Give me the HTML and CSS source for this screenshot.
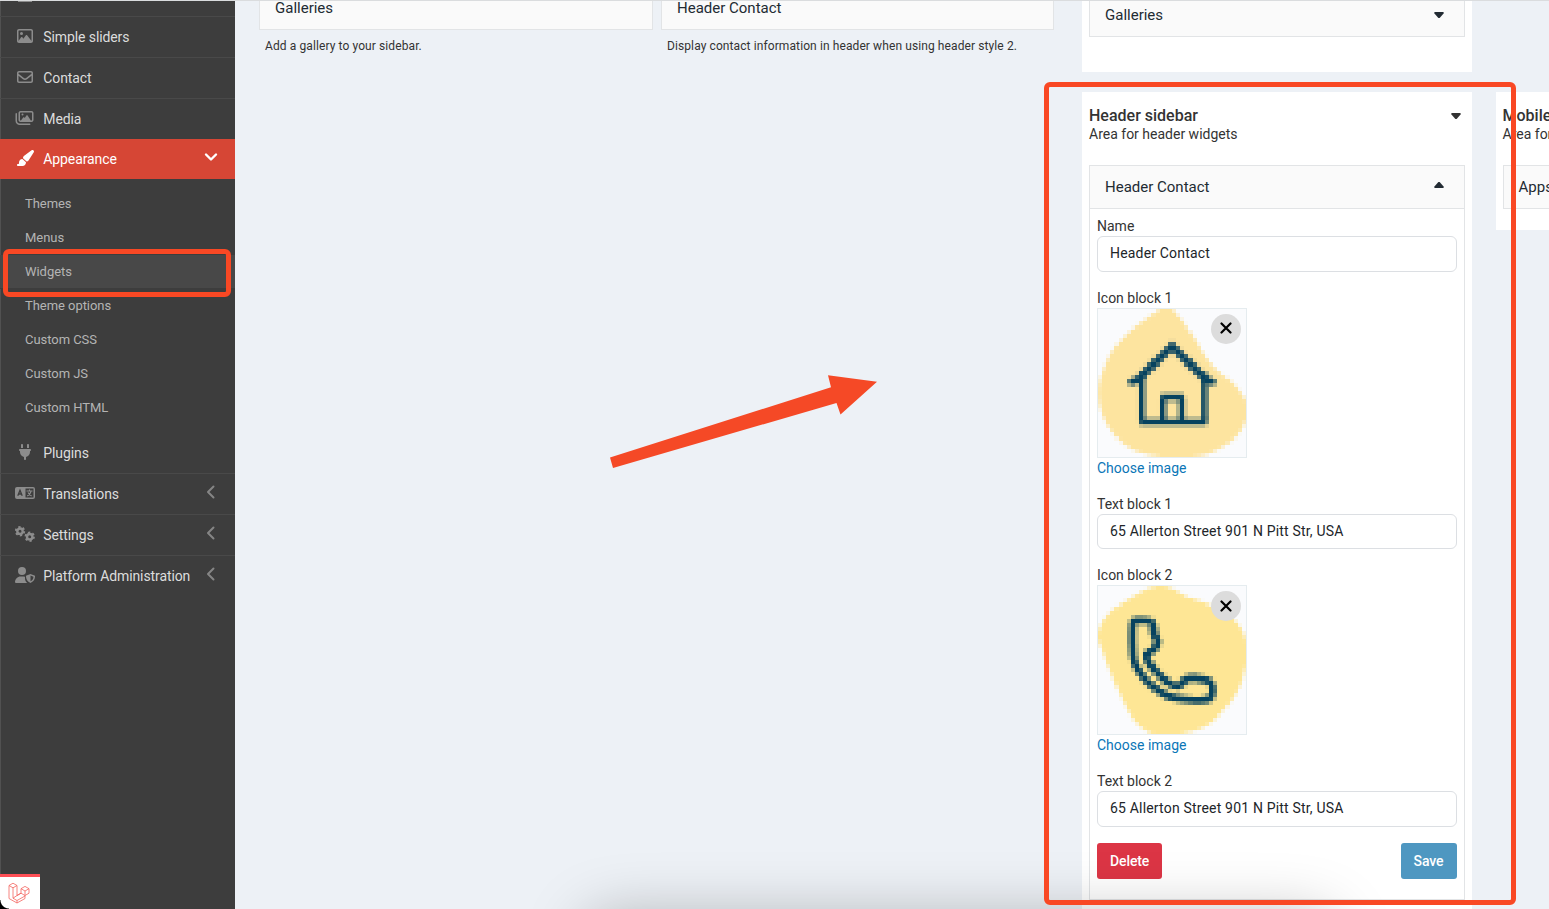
FILE: index.html
```
<!DOCTYPE html>
<html lang="en">
<head>
<meta charset="utf-8">
<title>Widgets</title>
<link rel="stylesheet" href="styles.css">
</head>
<body>
<div class="page">
  <aside class="sidebar">
    <nav class="menu">
      <div class="item item-cut"><svg class="icon" viewBox="0 0 20 1"><path d="M3 0h14v1H3z"/></svg></div>
      <div class="item"><svg class="icon" viewBox="-64 0 640 512"><path d="M448 80c8.800 0 16 7.200 16 16V415.800l-5-6.500-136-176c-4.500-5.900-11.600-9.300-19-9.300s-14.400 3.400-19 9.300L202 340.700l-30.500-42.700C167 291.700 159.800 288 152 288s-15 3.700-19.500 10.100l-80 112L48 416.300V96c0-8.800 7.200-16 16-16H448zM64 32C28.700 32 0 60.700 0 96V416c0 35.300 28.700 64 64 64H448c35.300 0 64-28.700 64-64V96c0-35.300-28.700-64-64-64H64zm80 192a48 48 0 1 0 0-96 48 48 0 1 0 0 96z"/></svg><span>Simple sliders</span></div>
      <div class="item"><svg class="icon" viewBox="-64 0 640 512"><path d="M64 112c-8.800 0-16 7.200-16 16v22.100L220.500 291.700c20.700 17 50.400 17 71.100 0L464 150.100V128c0-8.800-7.200-16-16-16H64zM48 212.200V384c0 8.800 7.200 16 16 16H448c8.800 0 16-7.200 16-16V212.200L322 328.800c-38.400 31.500-93.700 31.500-132 0L48 212.200zM0 128C0 92.700 28.700 64 64 64H448c35.300 0 64 28.700 64 64V384c0 35.300-28.700 64-64 64H64c-35.300 0-64-28.700-64-64V128z"/></svg><span>Contact</span></div>
      <div class="item"><svg class="icon icon-wide" viewBox="-32 0 640 512"><path d="M160 80H512c8.800 0 16 7.200 16 16V320c0 8.800-7.200 16-16 16H490.800L388.100 178.900c-4.400-6.800-12-10.900-20.100-10.900s-15.700 4.100-20.100 10.900l-52.200 79.800-12.400-16.900c-4.500-6.200-11.700-9.800-19.400-9.800s-14.800 3.600-19.400 9.800L175.600 336H160c-8.800 0-16-7.200-16-16V96c0-8.800 7.200-16 16-16zM96 96V320c0 35.300 28.700 64 64 64H512c35.300 0 64-28.700 64-64V96c0-35.300-28.700-64-64-64H160c-35.300 0-64 28.700-64 64zM48 120c0-13.300-10.700-24-24-24S0 106.700 0 120V344c0 75.100 60.900 136 136 136H456c13.300 0 24-10.700 24-24s-10.700-24-24-24H136c-48.600 0-88-39.400-88-88V120zm208 24a32 32 0 1 0-64 0 32 32 0 1 0 64 0z"/></svg><span>Media</span></div>
      <div class="item item-active"><svg class="icon" viewBox="-32 0 640 512"><path d="M339.300 367.100c27.300-3.900 51.900-19.400 67.200-42.900L568.200 74.100c12.600-19.500 9.400-45.300-7.600-61.200S517.700-4.400 499.100 9.600L262.400 187.200c-24 18-38.200 46.100-38.400 76.100L339.300 367.100zm-19.600 25.400l-116-104.400C143.900 290.300 96 339.600 96 400c0 3.900.2 7.800.6 11.600C98.400 429.100 86.400 448 68.800 448H64c-17.700 0-32 14.300-32 32s14.300 32 32 32H208c61.900 0 112-50.100 112-112c0-2.500-.1-5-.2-7.500z"/></svg><span>Appearance</span><svg class="chev" viewBox="0 0 14 14"><path d="M2 4.500l5 5 5-5"/></svg></div>
    </nav>
    <div class="submenu">
      <a>Themes</a><a>Menus</a><a class="current">Widgets</a><a>Theme options</a><a>Custom CSS</a><a>Custom JS</a><a>Custom HTML</a>
      <div class="outline outline-menu"></div>
    </div>
    <nav class="menu">
      <div class="item"><svg class="icon" viewBox="-128 0 640 512"><path d="M96 0C78.300 0 64 14.300 64 32v96h64V32c0-17.700-14.300-32-32-32zM288 0c-17.700 0-32 14.300-32 32v96h64V32c0-17.700-14.300-32-32-32zM32 160c-17.700 0-32 14.300-32 32s14.300 32 32 32v32c0 77.400 55 142 128 156.800V480c0 17.700 14.300 32 32 32s32-14.300 32-32V412.800C297 398 352 333.400 352 256V224c17.700 0 32-14.300 32-32s-14.300-32-32-32H32z"/></svg><span>Plugins</span></div>
      <div class="item"><svg class="icon" viewBox="0 0 20 16"><path fill-rule="evenodd" d="M2 2h16a2 2 0 0 1 2 2v8a2 2 0 0 1-2 2H2a2 2 0 0 1-2-2V4a2 2 0 0 1 2-2zM10.500 3.500v9h8v-9z"/><path class="cut" d="M2.800 10.800L5 5.200l2.200 5.600M3.600 9h2.800"/><path class="line" d="M11.500 6h6M14.500 4.500V6M16 6.500c-.5 2-2 3.600-3.800 4.400M13 7.500c.8 1.600 2 2.700 3.600 3.400"/></svg><span>Translations</span><svg class="chev" viewBox="0 0 14 14"><path d="M9.500 1.500L4 7l5.500 5.500"/></svg></div>
      <div class="item"><svg class="icon" viewBox="0 0 20 16"><circle class="teeth" cx="5" cy="5.200" r="4.200"/><circle class="ring" cx="5" cy="5.200" r="2.700"/><circle class="teeth" cx="14.700" cy="10.700" r="4.200"/><circle class="ring" cx="14.700" cy="10.700" r="2.700"/></svg><span>Settings</span><svg class="chev" viewBox="0 0 14 14"><path d="M9.500 1.500L4 7l5.500 5.500"/></svg></div>
      <div class="item"><svg class="icon" viewBox="0 0 20 16"><circle cx="7" cy="4" r="4"/><path d="M5.600 9.500h2.800l1.600.2v1.800c0 1.800.8 3.300 2.200 4.500H1a1 1 0 0 1-1-1c0-3 2.500-5.500 5.600-5.500z"/><path fill-rule="evenodd" d="M15.500 7l4.500 1.700c.2 3-1.200 6-4.500 7.300-3.300-1.300-4.700-4.300-4.500-7.300zM15.500 8.600v5.700c2-1 2.900-2.700 3-4.600z"/></svg><span>Platform Administration</span><svg class="chev" viewBox="0 0 14 14"><path d="M9.500 1.500L4 7l5.500 5.500"/></svg></div>
    </nav>
    <div class="debugbar"><svg viewBox="0 0 22 22"><path d="M1 3.500l4-2.300 4 2.300v10l4-2.300V6.700l4-2.300 4 2.300v4.500l-4 2.300v3L9 21l-8-4.500zM1 3.500l4 2.300 4-2.300M5 5.800v10.400L9 18.500 17 14M9 13.500l-4 2.700M13 6.700L17 9l4-2.300M17 9v4.500l-4-2.300M9 18.500V21M9 13.500l4-2.300"/></svg></div>
  </aside>

  <main class="content">
    <section class="available">
      <div><div class="card">Galleries</div><p>Add a gallery to your sidebar.</p></div>
      <div><div class="card">Header Contact</div><p>Display contact information in header when using header style 2.</p></div>
    </section>
    <section class="areas">
      <div class="area area-top">
        <div class="widget"><div class="widget-head">Galleries<i class="caret"></i></div></div>
      </div>
      <div class="area-row">
        <div class="area area-main">
          <div class="area-head"><div><h2>Header sidebar</h2><p>Area for header widgets</p></div><i class="caret"></i></div>
          <div class="widget">
            <div class="widget-head">Header Contact<i class="caret caret-up"></i></div>
            <form class="form">
              <div class="field"><label>Name</label><div class="input">Header Contact</div></div>
              <div class="field"><label>Icon block 1</label><div class="thumb"><canvas id="house" width="36" height="36"></canvas><span class="remove"><svg viewBox="0 0 12 12"><path d="M1.500 1.500l9 9M10.500 1.500l-9 9"/></svg></span></div><a class="choose">Choose image</a></div>
              <div class="field"><label>Text block 1</label><div class="input">65 Allerton Street 901 N Pitt Str, USA</div></div>
              <div class="field"><label>Icon block 2</label><div class="thumb"><canvas id="phone" width="36" height="36"></canvas><span class="remove"><svg viewBox="0 0 12 12"><path d="M1.500 1.500l9 9M10.500 1.500l-9 9"/></svg></span></div><a class="choose">Choose image</a></div>
              <div class="field"><label>Text block 2</label><div class="input">65 Allerton Street 901 N Pitt Str, USA</div></div>
              <div class="actions"><span class="btn btn-danger">Delete</span><span class="btn btn-info">Save</span></div>
            </form>
          </div>
        </div>
        <div class="area area-mobile">
          <div class="area-head"><div><h2>Mobile sidebar</h2><p>Area for mobile</p></div></div>
          <div class="widget"><div class="widget-head">Apps</div></div>
        </div>
      </div>
    </section>
  </main>
  <div class="shade"></div>
  <svg class="arrow" viewBox="600 360 290 120"><path d="M610 457.500L831 387.300 828 375.300 877 381.800 840.500 414.500 836.500 403 613 468z"/></svg>
  <div class="outline outline-area"></div>
</div>
<script src="icons.js"></script>
</body>
</html>
```
FILE: styles.css
```
* { box-sizing: border-box; }
body { margin: 0; font-family: Roboto, "Liberation Sans", sans-serif; font-size: 14px; line-height: 20px; color: #333; }
h2, p { margin: 0; }
.page { position: relative; display: flex; width: 1549px; height: 909px; overflow: hidden; background: #edf1f6; border-top: 1px solid #dadcde; }

.sidebar { position: relative; width: 235px; height: 908px; flex: none; background: linear-gradient(90deg, #515151 1px, #3d3d3d 1px); color: #dcdcdc; overflow: hidden; }
.item { display: flex; align-items: center; height: 41px; padding: 0 17px 0 15px; border-bottom: 1px solid #494949; }
.item span { flex: 1; margin-left: 8.3px; letter-spacing: -.1px; }
.item:last-child { border-bottom-color: transparent; }
.item-cut { height: 16px; align-items: flex-start; }
.item-cut .icon { height: 1px; margin-top: 0; }
.item-active { height: 40px; margin-top: -1px; position: relative; background: #d64635; border: 0; color: #fff; }
.icon { width: 20px; height: 16px; margin-top: -2px; fill: #8c8c8c; flex: none; }
.item-active .icon { fill: #fff; }
.icon .cut { fill: none; stroke: #3d3d3d; stroke-width: 1.3; }
.icon .line { fill: none; stroke: #8c8c8c; stroke-width: 1.1; }
.icon .teeth { fill: none; stroke: #8c8c8c; stroke-width: 2; stroke-dasharray: 2.2 2.2; }
.icon .ring { fill: none; stroke: #8c8c8c; stroke-width: 2.4; }
.chev { width: 14px; height: 14px; margin-top: -4px; }
.chev path { fill: none; stroke: #858585; stroke-width: 2; stroke-linecap: round; stroke-linejoin: round; }
.item-active .chev path { stroke: #fff; stroke-width: 2.4; }
.submenu { position: relative; padding: 8px 0; }
.submenu a { display: block; height: 34px; padding-left: 25px; line-height: 33px; font-size: 13px; letter-spacing: -.05px; color: #b4b4b4; }
.submenu .current { background: linear-gradient(#484848 33px, #3d3d3d 33px); }
.debugbar { position: absolute; left: 0; bottom: 0; width: 40px; height: 35px; padding: 5px 0 0 8px; border-top: 3px solid #ff4f56; background: radial-gradient(circle at 100% 0, #fff 0 8px, #000 9px) 0 100% / 9px 9px no-repeat, #fff; }
.debugbar svg { width: 22px; height: 22px; display: block; }
.debugbar path { fill: none; stroke: #f4645f; stroke-width: .8; stroke-linejoin: round; }

.content { display: flex; gap: 28px; padding-left: 24px; flex: none; }
.available { display: grid; grid-template-columns: 394px 393px; gap: 8px; align-content: start; }
.available p { padding: 6px 6px; font-size: 12px; line-height: 20px; letter-spacing: .1px; }
.card { height: 29px; padding: 0 15px; border: 1px solid #e2e4e6; border-top: 0; background: #fafafa; font-size: 15px; line-height: 14px; color: #222b33; }
.area { width: 390px; padding: 0 7px; background: #fff; }
.area-top { height: 71px; margin-bottom: 20px; }
.area-row { display: flex; gap: 24px; }
.area-main { height: 830px; }
.area-mobile { height: 138px; padding-left: 6.5px; }
.area-head { display: flex; justify-content: space-between; height: 73px; padding: 14px 4px 0 0; }
.area-head .caret { margin-top: 7px; }
h2 { font-size: 16px; line-height: 20px; font-weight: 500; }
.area-head p { line-height: 17px; }
.widget { border: 1px solid #e2e4e6; width: 376px; }
.area-top .widget { border-top: 0; }
.widget-head { display: flex; align-items: center; justify-content: space-between; height: 43px; padding: 0 20px 0 15px; background: #fafafa; border-bottom: 1px solid #e2e4e6; color: #222b33; font-size: 15px; }
.area-top .widget-head, .area-mobile .widget-head { border-bottom: 0; }
.area-mobile .widget-head { height: 42px; }
.area-top .widget-head { height: 35px; padding-bottom: 7px; }
.caret { width: 10px; height: 6px; background: currentColor; clip-path: polygon(8% 0, 92% 0, 100% 18%, 56% 100%, 44% 100%, 0 18%); }
.caret-up { transform: rotate(180deg); margin-top: -4px; }
.form { padding: 7px 7px 20px; }
.field { margin-bottom: 16px; }
.field label { display: block; height: 20px; }
.input { height: 35.5px; padding: 0 12px; border: 1px solid #dcdfe3; border-radius: 6px; line-height: 33px; color: #212529; letter-spacing: .18px; }
.thumb { position: relative; width: 150px; height: 150px; border: 1px solid #e5ecef; background: #fafbfd; }
.thumb canvas { display: block; width: 148px; height: 148px; image-rendering: pixelated; }
.remove { position: absolute; top: 5px; right: 5px; width: 30px; height: 30px; border-radius: 50%; background: #dcdcdc; display: grid; place-items: center; }
.remove svg { width: 12px; height: 12px; margin-top: -1px; }
.remove path { stroke: #000; stroke-width: 2.2; stroke-linecap: round; }
.choose { display: block; color: #0b76b7; }
.actions { display: flex; justify-content: space-between; }
.btn { height: 36px; padding: 0 13px; border-radius: 3px; line-height: 36px; font-weight: 500; letter-spacing: -.1px; color: #fff; }
.btn-danger { background: #dc3545; }
.btn-info { background: #4e97c1; padding: 0 13.5px 0 12.5px; }

.shade { position: absolute; left: 592px; top: 922px; width: 735px; height: 100px; border-radius: 20px; box-shadow: 0 0 60px 8px rgba(0,0,0,.26); }
.arrow { position: absolute; left: 600px; top: 359px; width: 290px; height: 120px; fill: #f54926; }
.outline { position: absolute; border: 5px solid #f94824; border-radius: 6px; }
.outline-menu { left: 3px; top: 70px; width: 228px; height: 48px; }
.outline-area { left: 1044px; top: 81px; width: 472px; height: 823px; }
.icon-wide { transform: translateX(-.5px); }
```
FILE: icons.js
```
// Low resolution thumbnails, scaled up by the stylesheet.
function smooth(ctx, pts, fill) {
  const n = pts.length;
  const mid = (a, b) => [(a[0] + b[0]) / 2, (a[1] + b[1]) / 2];
  ctx.beginPath();
  ctx.moveTo(...mid(pts[n - 1], pts[0]));
  pts.forEach((p, i) => ctx.quadraticCurveTo(...p, ...mid(p, pts[(i + 1) % n])));
  ctx.closePath();
  if (fill) { ctx.fillStyle = fill; ctx.fill(); } else ctx.stroke();
}
function setup(id) {
  const ctx = document.getElementById(id).getContext('2d');
  ctx.scale(36 / 444, 36 / 444);
  ctx.strokeStyle = '#06425f';
  ctx.lineWidth = 18;
  return ctx;
}
const h = setup('house');
smooth(h, [[217,-8],[235,14],[260,44],[297,99],[322,149],[372,194],[417,234],[450,284],[450,314],[432,364],[397,399],[362,424],[297,443],[207,449],[107,428],[52,388],[12,324],[-3,244],[17,174],[52,109],[97,64],[147,29],[182,0]], '#fde49f');
h.stroke(new Path2D('M132 192V338M319 338V192M194 338V265M252 338V265'));
h.stroke(new Path2D('M126 338H325M188 264H258'));
h.lineWidth = 22;
h.stroke(new Path2D('M92 222L120 212L222 112L324 212L352 222'));
const p = setup('phone');
p.lineWidth = 22;
smooth(p, [[172,-6],[227,8],[267,33],[327,53],[377,78],[417,108],[440,143],[450,203],[435,283],[402,343],[362,393],[307,431],[237,447],[177,449],[127,427],[87,373],[57,303],[27,233],[7,173],[-4,153],[12,103],[47,68],[87,43]], '#fee695');
smooth(p, [[103,114],[107,105],[122,102],[150,102],[166,108],[166,146],[183,171],[164,193],[142,204],[152,230],[177,263],[207,290],[239,303],[254,291],[269,273],[307,277],[341,285],[346,318],[336,343],[267,345],[212,333],[160,300],[120,255],[103,218]]);
```
